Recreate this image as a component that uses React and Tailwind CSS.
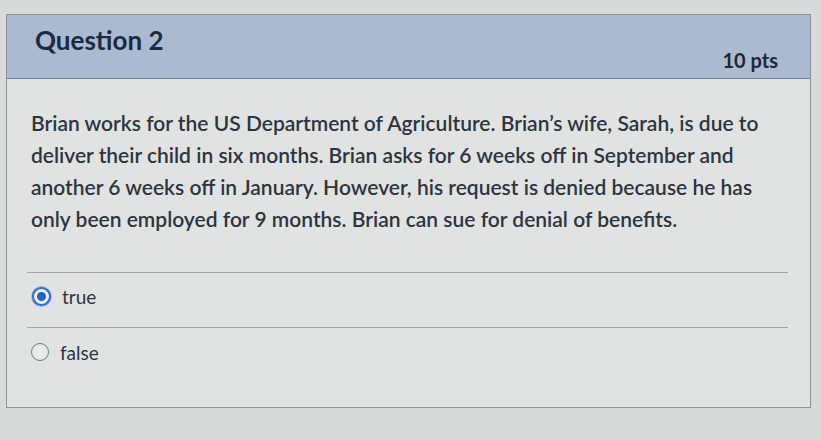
export default function App() {
  return (
    <div className="h-[440px] w-[821px] overflow-hidden bg-[#d9dbdb] pl-[6px] pt-[14px] font-['Lato','Liberation_Sans',sans-serif]">
      <div className="flex h-[394px] w-[805px] flex-col border border-[#8c9197] bg-[#e1e3e2]">
        <header className="flex h-[64px] shrink-0 items-start justify-between border-b border-[#737d8b] bg-[#a9bad1] pl-[28px] pr-[32px]">
          <h2 className="mt-[9px] text-[26px] font-bold leading-[32px] text-[#1c2a43]">Question 2</h2>
          <span className="mt-[33px] text-[20px] font-bold leading-[24px] text-[#1f2733]">10 pts</span>
        </header>

        <div className="pl-[24px] pr-[10px] pt-[28px]">
          <p className="text-[21px] leading-[32px] font-semibold text-[#2d3540]">
            Brian works for the US Department of Agriculture. Brian’s wife, Sarah, is due to
            <br />
            deliver their child in six months. Brian asks for 6 weeks off in September and
            <br />
            another 6 weeks off in January. However, his request is denied because he has
            <br />
            only been employed for 9 months. Brian can sue for denial of benefits.
          </p>
        </div>

        <div className="ml-[20px] mr-[22px] mt-[37px]">
          <label className="flex h-[55px] items-start gap-[11px] border-t border-[#a3a7ab] pl-[5px] pt-[13px]">
            <span className="mt-[1px] flex h-[19px] w-[19px] items-center justify-center rounded-full border-2 border-[#2f6ed3] bg-[#eef2f8] shadow-[0_0_0_1px_#9db6e0]">
              <span className="h-[9px] w-[9px] rounded-full bg-[#2563c9]" />
            </span>
            <span className="text-[19px] leading-[22px] text-[#2d3540]">true</span>
          </label>
          <label className="flex h-[55px] items-start gap-[11px] border-t border-[#a3a7ab] pl-[4px] pt-[14px]">
            <span className="mt-[1px] h-[18px] w-[18px] rounded-full border-[1.5px] border-[#767a7f] bg-[#e8eaea]" />
            <span className="text-[19px] leading-[22px] text-[#2d3540]">false</span>
          </label>
        </div>
      </div>
    </div>
  );
}
